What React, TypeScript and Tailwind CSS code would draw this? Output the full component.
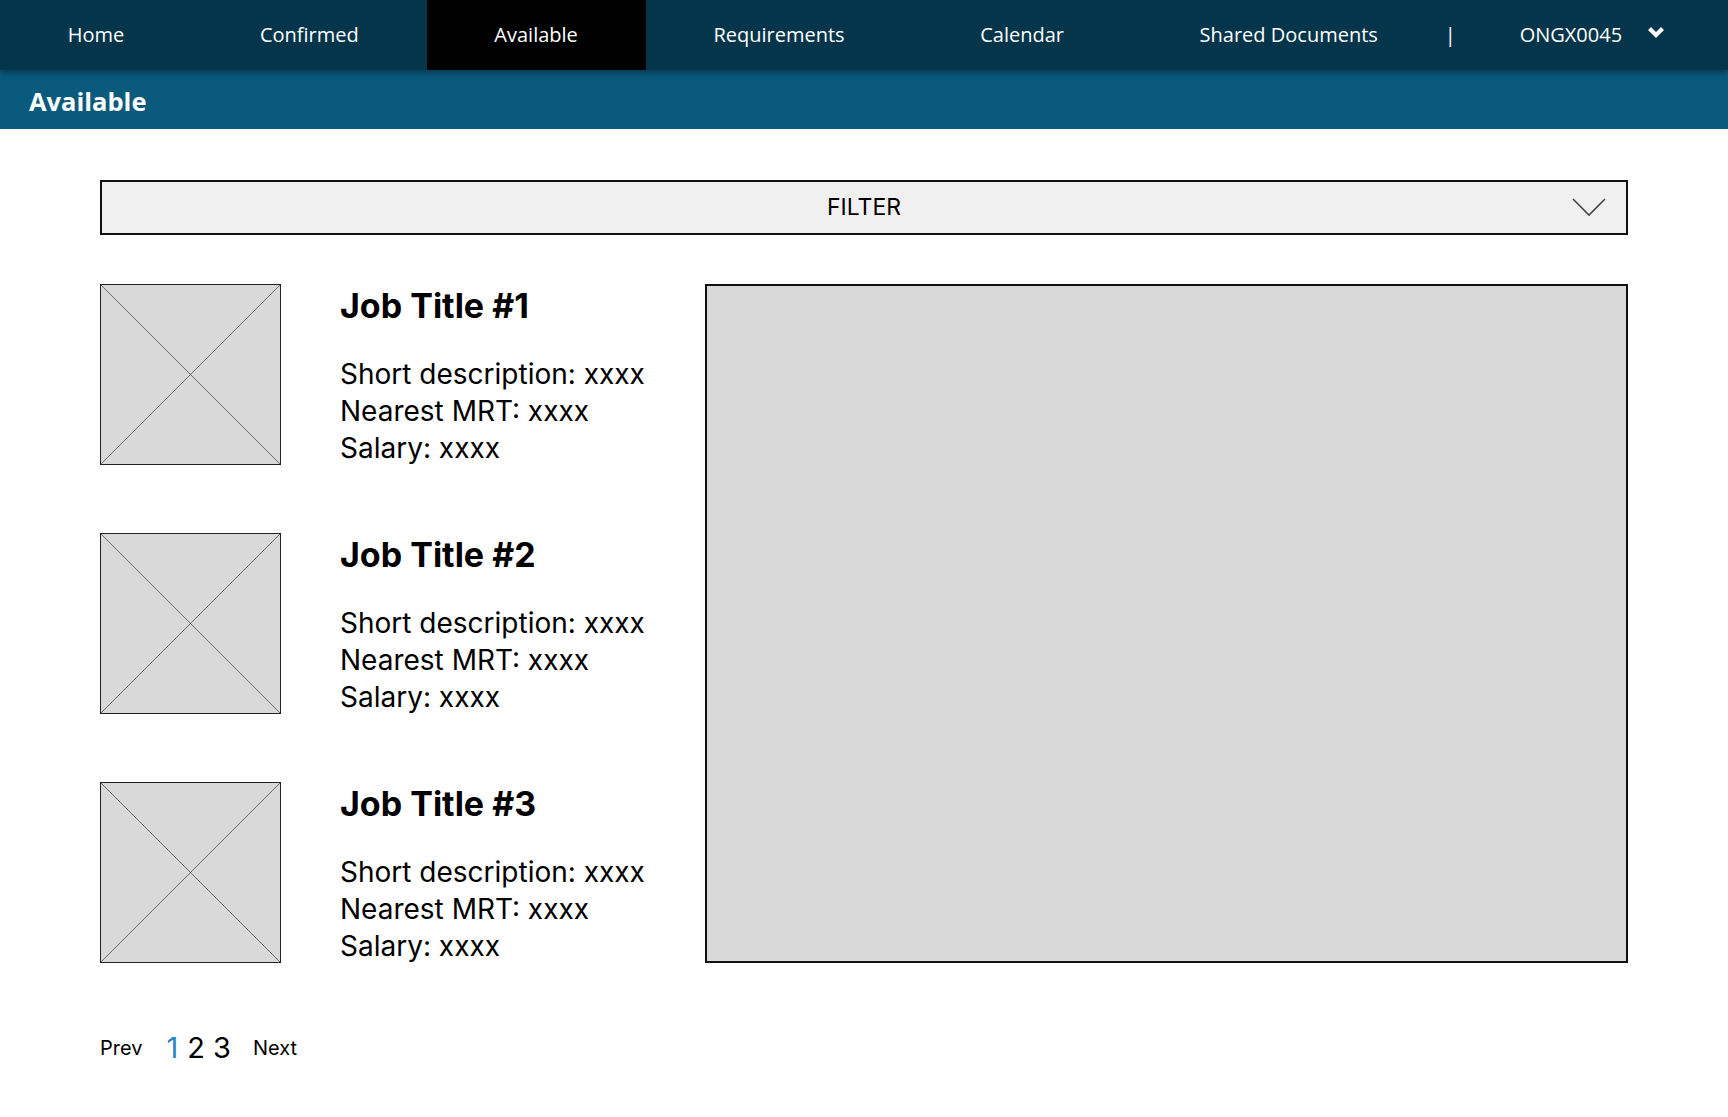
const navItems = ["Home", "Confirmed", "Available", "Requirements", "Calendar", "Shared Documents"];

const jobs = [1, 2, 3];

const Placeholder = () => (
  <div className="w-[181px] h-[181px] shrink-0 bg-[#d9d9d9] border border-[#222]">
    <svg className="w-full h-full block" viewBox="0 0 100 100" preserveAspectRatio="none">
      <line x1="0" y1="0" x2="100" y2="100" stroke="#222" strokeWidth="0.6" vectorEffect="non-scaling-stroke" />
      <line x1="100" y1="0" x2="0" y2="100" stroke="#222" strokeWidth="0.6" vectorEffect="non-scaling-stroke" />
    </svg>
  </div>
);

export default function App() {
  return (
    <div className="min-h-screen bg-white">
      <div className="relative z-10 h-[70px] bg-[#05354a] shadow-[0_3px_6px_rgba(0,0,0,0.35)] flex items-center text-white text-[20px] font-['Open_Sans',sans-serif]">
        {navItems.map((item) => (
          <div
            key={item}
            className={"h-full flex items-center px-[67.8px] " + (item === "Available" ? "bg-black" : "")}
          >
            {item}
          </div>
        ))}
        <div className="ml-[-1px]">|</div>
        <div className="ml-[64px]">ONGX0045</div>
        <svg className="ml-[25px] mt-[-2px]" width="18" height="14" viewBox="0 0 18 14">
          <path d="M1 3 L4 0 L9 5 L14 0 L17 3 L9 11 Z" fill="white" />
        </svg>
      </div>
      <div className="h-[59px] pt-[3px] bg-[#0a5a7d] flex items-center pl-[29px] text-white text-[25.5px] font-bold font-['Open_Sans',sans-serif]">
        Available
      </div>

      <div className="px-[100px] pt-[51px] font-['Inter',sans-serif] text-black">
        <div className="relative h-[55px] bg-[#f0f0f0] border-2 border-[#111] flex items-center justify-center text-[23px]">
          FILTER
          <svg className="absolute right-[20px] top-[16px]" width="34" height="19" viewBox="0 0 34 19">
            <path d="M1 1 L17 17 L33 1" fill="none" stroke="#444" strokeWidth="1.6" />
          </svg>
        </div>

        <div className="flex mt-[49px]">
          <div className="w-[605px] flex flex-col gap-[68px]">
            {jobs.map((n) => (
              <div key={n} className="flex h-[181px]">
                <Placeholder />
                <div className="ml-[59px] pt-[2px]">
                  <div className="text-[34px] font-bold leading-[40px]">Job Title #{n}</div>
                  <div className="mt-[30px] text-[28px] leading-[37px]">
                    <div>Short description: xxxx</div>
                    <div>Nearest MRT: xxxx</div>
                    <div>Salary: xxxx</div>
                  </div>
                </div>
              </div>
            ))}
          </div>
          <div className="flex-1 h-[679px] bg-[#d9d9d9] border-2 border-[#111]" />
        </div>

        <div className="flex items-center mt-[63px] text-[20px]">
          <span>Prev</span>
          <span className="ml-[24px] text-[29px] text-[#2a86c0]">1</span>
          <span className="ml-[9px] text-[29px]">2</span>
          <span className="ml-[8px] text-[29px]">3</span>
          <span className="ml-[22px]">Next</span>
        </div>
      </div>
    </div>
  );
}
